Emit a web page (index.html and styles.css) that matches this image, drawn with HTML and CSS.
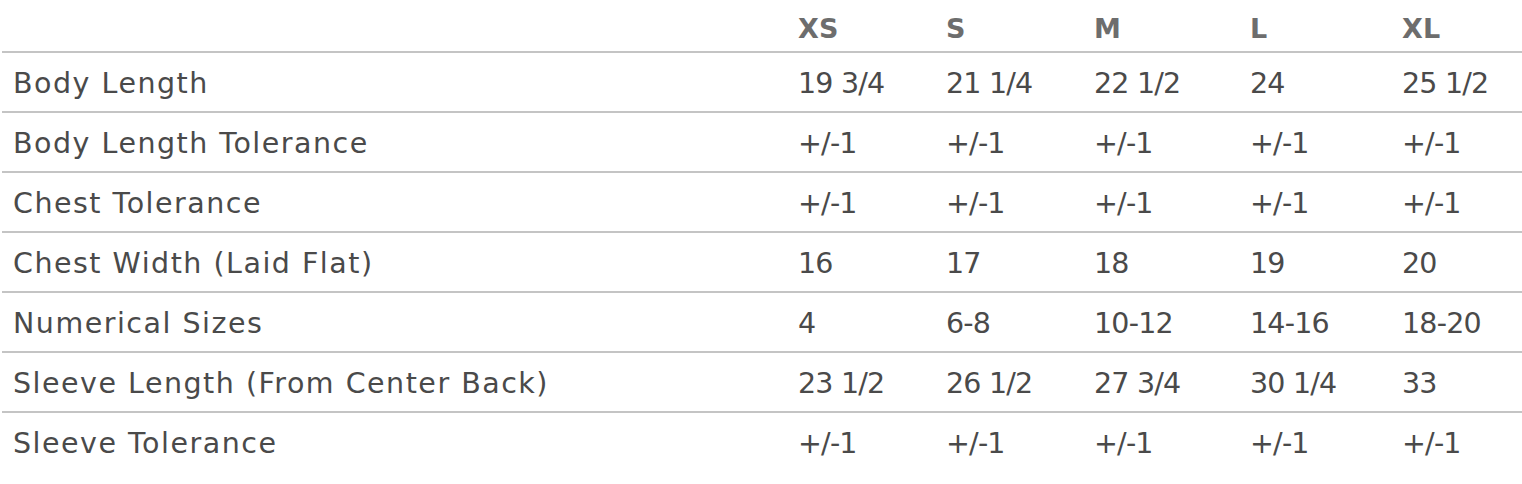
FILE: index.html
```html
<!DOCTYPE html>
<html>
<head>
<meta charset="utf-8">
<link rel="stylesheet" href="styles.css">
</head>
<body>
<table class="size-table">
  <colgroup>
    <col class="c-label">
    <col class="c-xs">
    <col class="c-s">
    <col class="c-m">
    <col class="c-l">
    <col class="c-xl">
  </colgroup>
  <thead>
    <tr class="head-row">
      <th></th><th>XS</th><th>S</th><th>M</th><th>L</th><th>XL</th>
    </tr>
  </thead>
  <tbody>
    <tr><td class="label">Body Length</td><td>19 3/4</td><td>21 1/4</td><td>22 1/2</td><td>24</td><td>25 1/2</td></tr>
    <tr><td class="label">Body Length Tolerance</td><td>+/-1</td><td>+/-1</td><td>+/-1</td><td>+/-1</td><td>+/-1</td></tr>
    <tr><td class="label">Chest Tolerance</td><td>+/-1</td><td>+/-1</td><td>+/-1</td><td>+/-1</td><td>+/-1</td></tr>
    <tr><td class="label">Chest Width (Laid Flat)</td><td>16</td><td>17</td><td>18</td><td>19</td><td>20</td></tr>
    <tr><td class="label">Numerical Sizes</td><td>4</td><td>6-8</td><td>10-12</td><td>14-16</td><td>18-20</td></tr>
    <tr><td class="label">Sleeve Length (From Center Back)</td><td>23 1/2</td><td>26 1/2</td><td>27 3/4</td><td>30 1/4</td><td>33</td></tr>
    <tr><td class="label">Sleeve Tolerance</td><td>+/-1</td><td>+/-1</td><td>+/-1</td><td>+/-1</td><td>+/-1</td></tr>
  </tbody>
</table>
</body>
</html>
```
FILE: styles.css
```css
html, body {
  margin: 0;
  padding: 0;
  background: #ffffff;
}
body {
  padding-left: 2px;
  font-family: "DejaVu Sans", "Noto Sans", sans-serif;
  color: #4a4a4a;
}
.size-table {
  width: 1520px;
  border-collapse: collapse;
  table-layout: fixed;
}
.c-label { width: 785px; }
.c-xs { width: 148px; }
.c-s { width: 148px; }
.c-m { width: 156px; }
.c-l { width: 152px; }
.c-xl { width: 131px; }

.size-table th,
.size-table td {
  padding: 0 0 0 11px;
  text-align: left;
  vertical-align: middle;
  white-space: nowrap;
}
.head-row th {
  height: 52px;
  font-size: 27px;
  font-weight: bold;
  color: #6d6d6d;
  letter-spacing: 0.3px;
  padding-top: 5px;
  box-sizing: border-box;
}
.size-table tbody tr {
  border-top: 2px solid #c4c4c4;
}
.size-table tbody td {
  height: 60px;
  font-size: 28.5px;
  letter-spacing: -0.8px;
  padding-top: 2px;
  box-sizing: border-box;
}
.size-table tbody td.label {
  letter-spacing: 1.5px;
}
```
